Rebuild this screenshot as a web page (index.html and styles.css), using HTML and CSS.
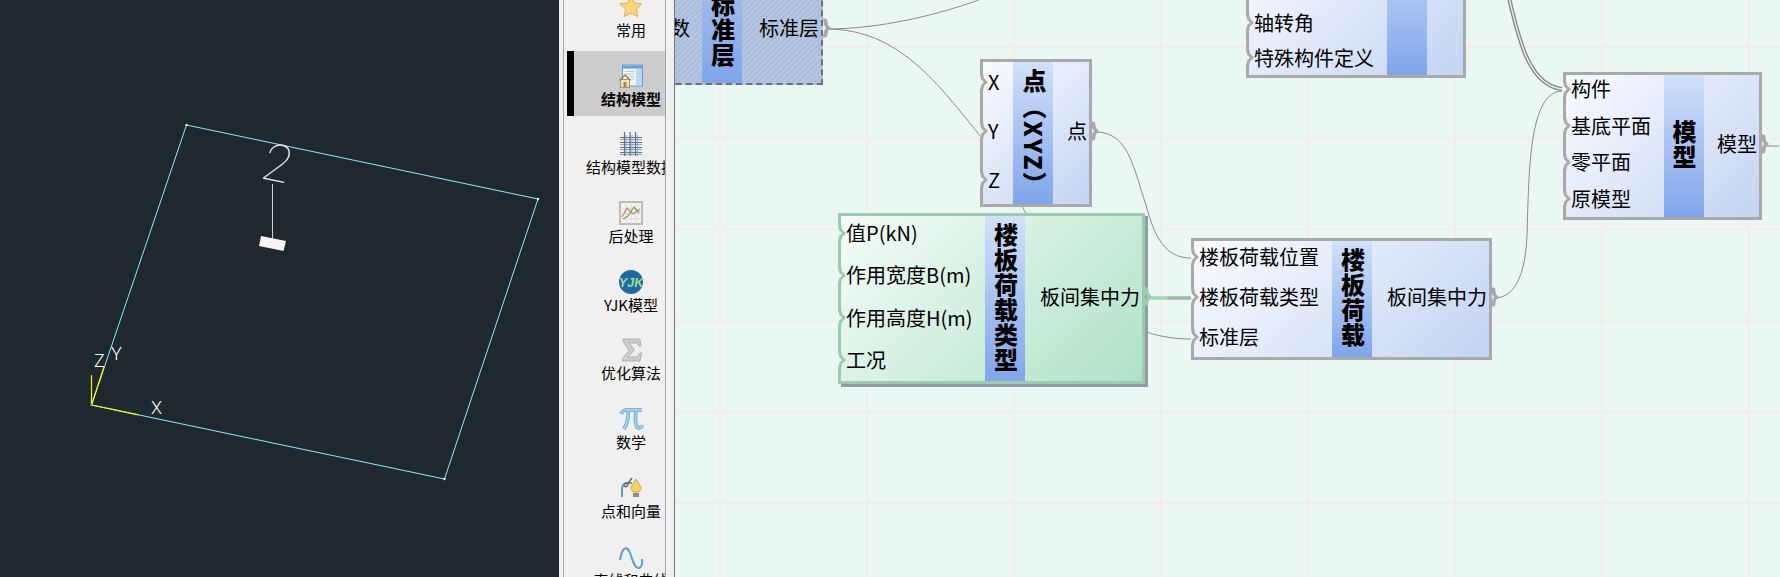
FILE: index.html
```html
<!DOCTYPE html>
<html lang="zh-CN">
<head>
<meta charset="utf-8">
<title>Graph editor</title>
<link rel="stylesheet" href="styles.css">
</head>
<body>
<div class="app">
  <section class="viewport">
    <svg class="scene" width="559" height="577" viewBox="0 0 559 577">
      <polygon class="slab" points="186.500,125 538,199 444.500,479 91.500,405"/>
      <line class="axis" x1="91.500" y1="405" x2="138.500" y2="414.800"/>
      <line class="axis" x1="91.500" y1="405" x2="104" y2="367"/>
      <line class="axis" x1="91.500" y1="405" x2="91.500" y2="375"/>
      <circle class="vertex" cx="186.500" cy="125" r="1.200"/>
      <circle class="vertex" cx="538" cy="199" r="1.200"/>
      <circle class="vertex" cx="444.500" cy="479" r="1.200"/>
      <circle class="vertex-dim" cx="91.500" cy="405" r="1.200"/>
      <line class="leader" x1="272.500" y1="184" x2="272.500" y2="243"/>
      <polygon class="tag" points="261,236 286,241 283.500,251 259,246"/>
      <text class="label-2" transform="matrix(1 .2 -.28 1 259 178)">2</text>
      <text class="axis-name" x="94" y="367">Z</text>
      <text class="axis-name" x="111" y="360">Y</text>
      <text class="axis-name" x="151" y="414">X</text>
    </svg>
  </section>

  <nav class="toolbox">
    <div class="tool-panel">
      <div class="tool">
        <svg class="tool-icon" viewBox="0 0 24 24"><path class="i-star" d="M12 1l3.300 7 7.700.9-5.700 5.200 1.500 7.600L12 18l-6.800 3.700 1.500-7.600L1 8.900 8.700 8z"/></svg>
        <span class="tool-name">常用</span>
      </div>
      <div class="tool tool-active">
        <svg class="tool-icon" viewBox="0 0 24 24">
          <rect class="i-win" x="3.500" y="1" width="20" height="21"/>
          <rect class="i-winbar" x="4" y="1.500" width="19" height="3"/>
          <rect class="i-winside" x="17" y="5" width="6" height="16"/>
          <path class="i-winlines" d="M6 7.500h9M6 10h9M9 12.500h6M11 15h4"/>
          <path class="i-roof" d="M0 16l6-6 6 6-1 1-5-5-5 5z"/>
          <rect class="i-house" x="1.500" y="15.500" width="9" height="8"/>
          <rect class="i-door" x="4.500" y="18" width="3" height="5.500"/>
        </svg>
        <span class="tool-name">结构模型</span>
      </div>
      <div class="tool">
        <svg class="tool-icon" viewBox="0 0 24 24">
          <path class="i-grid-b" d="M1 7.500h22M1 12.500h22M1 17.500h22M1 22.500h22"/>
          <path class="i-grid-g" d="M1 5.500h22M1 10.500h22M1 15.500h22M1 20.500h22M5.500 0v24M11 0v24M16.500 0v24"/>
          <path class="i-grid-b" d="M7 3v21M13 3v21M18.500 3v21"/>
        </svg>
        <span class="tool-name">结构模型数据</span>
      </div>
      <div class="tool">
        <svg class="tool-icon" viewBox="0 0 24 24">
          <rect class="i-chart" x="1" y="1" width="22" height="22"/>
          <path class="i-chartgrid" d="M1 8h22M1 13h22M1 18h22M7 1v22M12 1v22M17 1v22"/>
          <path class="i-red" d="M3 16l5-9 6 6 7-5"/>
          <path class="i-green" d="M4 18l5-3 6-9 5 6"/>
        </svg>
        <span class="tool-name">后处理</span>
      </div>
      <div class="tool">
        <svg class="tool-icon" viewBox="0 0 24 24">
          <circle class="i-globe" cx="12" cy="12" r="12"/>
          <text class="i-yjk" x="12" y="16.500">YJK</text>
        </svg>
        <span class="tool-name">YJK模型</span>
      </div>
      <div class="tool">
        <svg class="tool-icon" viewBox="0 0 24 24"><path class="i-sigma" d="M4 1H21L22 8H20L18.500 5H10L15.500 12 9 19H18.500L20.500 15H22.500L21 23H3.500V20.500L10 12.500 4 3.500z"/></svg>
        <span class="tool-name">优化算法</span>
      </div>
      <div class="tool">
        <svg class="tool-icon" viewBox="0 0 24 24">
          <path class="i-pi-edge" d="M2 7Q4 2.500 9 3H23M9.500 3Q9.500 15 5 22M17 3Q15 21 20 21Q22.500 20.500 23 18"/>
          <path class="i-pi-fill" d="M2 7Q4 2.500 9 3H23M9.500 3Q9.500 15 5 22M17 3Q15 21 20 21Q22.500 20.500 23 18"/>
        </svg>
        <span class="tool-name">数学</span>
      </div>
      <div class="tool">
        <svg class="tool-icon" viewBox="0 0 24 24">
          <path class="i-curve" d="M3 21V13q0-5 5-6h5"/>
          <path class="i-hand" d="M6 11L13 2"/>
          <circle class="i-knob" cx="7" cy="9" r="2"/>
          <path class="i-nib" d="M17 3l5 8q1 2-2 5h-6q-3-3-2-5z"/>
          <rect class="i-nibbase" x="14" y="17" width="6" height="4"/>
        </svg>
        <span class="tool-name">点和向量</span>
      </div>
      <div class="tool">
        <svg class="tool-icon" viewBox="0 0 24 24"><path class="i-wave" d="M1 15C3 2 8 0 11 8s5 16 9 15 3-6 3-9"/></svg>
        <span class="tool-name">直线和曲线</span>
      </div>
    </div>
  </nav>

  <main class="canvas">
    <svg class="wires" width="1104" height="577" viewBox="676 0 1104 577">
      <path class="wire" d="M828 29C880 29 940 15 985 -2"/>
      <path class="wire" d="M828 29C900 29 940 85 982 137"/>
      <path class="wire" d="M982 137C1000 160 1010 185 1025 210C1070 290 1120 339 1192 339"/>
      <path class="wire" d="M1097 132C1130 132 1135 170 1147 205C1155 235 1165 258 1192 258"/>
      <path class="wire" d="M1498 298C1522 295 1527 260 1528 235C1530 170 1530 92 1563 91"/>
      <path class="wire-multi" d="M1510 -2C1520 40 1530 85 1563 89"/>
      <path class="wire-core" d="M1510 -2C1520 40 1530 85 1563 89"/>
      <path class="wire" d="M1768 146H1780"/>
      <path class="wire-thick-a" d="M1146 298H1168"/>
      <path class="wire-thick-b" d="M1168 298H1194"/>
    </svg>

    <div class="node n-std">
      <div class="inputs"><div class="port port-plain">层数</div></div>
      <div class="title">标准层</div>
      <div class="outputs"><div class="port out">标准层</div></div>
    </div>

    <div class="node n-upper">
      <div class="inputs">
        <div class="port in">轴转角</div>
        <div class="port in">特殊构件定义</div>
      </div>
      <div class="title"></div>
      <div class="outputs"></div>
    </div>

    <div class="node n-point">
      <div class="inputs">
        <div class="port in">X</div>
        <div class="port in">Y</div>
        <div class="port in">Z</div>
      </div>
      <div class="title title-vertical">点（XYZ）</div>
      <div class="outputs"><div class="port out">点</div></div>
    </div>

    <div class="node n-green">
      <div class="inputs">
        <div class="port in">值P(kN)</div>
        <div class="port in">作用宽度B(m)</div>
        <div class="port in">作用高度H(m)</div>
        <div class="port in">工况</div>
      </div>
      <div class="title">楼板荷载类型</div>
      <div class="outputs"><div class="port out">板间集中力</div></div>
    </div>

    <div class="node n-load">
      <div class="inputs">
        <div class="port in">楼板荷载位置</div>
        <div class="port in">楼板荷载类型</div>
        <div class="port in">标准层</div>
      </div>
      <div class="title">楼板荷载</div>
      <div class="outputs"><div class="port out">板间集中力</div></div>
    </div>

    <div class="node n-model">
      <div class="inputs">
        <div class="port in">构件</div>
        <div class="port in">基底平面</div>
        <div class="port in">零平面</div>
        <div class="port in">原模型</div>
      </div>
      <div class="title">模型</div>
      <div class="outputs"><div class="port out">模型</div></div>
    </div>
  </main>
</div>
</body>
</html>
```
FILE: styles.css
```css
html, body {
  margin: 0;
  height: 100%;
  overflow: hidden;
  background: #20282f;
}

.app {
  display: flex;
  width: 1780px;
  height: 577px;
  overflow: hidden;
  font-family: "Noto Sans CJK SC", "Noto Sans", sans-serif;
  color: #000;
}

/* 3D viewport */
.viewport {
  flex: 0 0 559px;
  background: #20282f;
}
.scene { display: block; }
.slab { fill: none; stroke: #8cecfb; stroke-width: 1; }
.axis { stroke: #f8f800; stroke-width: 1.200; }
.vertex { fill: #f2f2f2; }
.vertex-dim { fill: #999; }
.leader { stroke: #cfcfcf; stroke-width: 1; }
.tag { fill: #f4f4f4; }
.label-2 {
  font: 100 50px Roboto, "Liberation Sans", sans-serif;
  fill: #e4e4e4;
}
.axis-name {
  font: 300 18px Roboto, "Liberation Sans", sans-serif;
  fill: #fff;
}

/* component toolbox */
.toolbox {
  flex: 0 0 116px;
  box-sizing: border-box;
  height: 577px;
  padding: 0 8px 0 4px;
  background: #f0f0f0;
  border-right: 1px solid #777;
}
.tool-panel {
  box-sizing: border-box;
  height: 577px;
  padding-left: 3px;
  border-left: 1px solid #a8a8a8;
  border-right: 1px solid #a8a8a8;
  overflow: hidden;
  display: flex;
  flex-direction: column;
  gap: 3.700px;
}
.tool {
  flex: 0 0 65px;
  box-sizing: border-box;
  width: 98px;
  padding: 13px 0 6px 23px;
  border-left: 7px solid transparent;
  display: flex;
  flex-direction: column;
  align-items: center;
  overflow: hidden;
}
.tool:first-child { margin-top: -18px; }
.tool-active {
  background: #cccccc;
  border-left-color: #000;
}
.tool-active .tool-name { font-weight: 700; }
.tool-icon {
  flex: 0 0 24px;
  width: 24px;
  height: 24px;
  overflow: visible;
}
.tool-name {
  flex: 0 0 22px;
  font-size: 15px;
  line-height: 21px;
  white-space: nowrap;
}

.i-star { fill: #fdd878; stroke: #e9ab55; stroke-width: 1; }
.i-win { fill: #eef4fa; stroke: #5d9fd3; stroke-width: 1; }
.i-winbar { fill: #5da4dc; }
.i-winside { fill: #bcd9f0; }
.i-winlines { stroke: #b5c6d6; fill: none; }
.i-roof { fill: #a2774a; }
.i-house { fill: #f3e2bb; stroke: #9a7a52; stroke-width: .8; }
.i-door { fill: #b9804a; }
.i-grid-b { stroke: #7ea7d4; stroke-width: 1; fill: none; }
.i-grid-g { stroke: #6b6f75; stroke-width: 1.200; fill: none; }
.i-chart { fill: #f4f4f4; stroke: #b4b4b4; stroke-width: 1.800; }
.i-chartgrid { stroke: #dcdcdc; fill: none; }
.i-red { stroke: #d57a70; stroke-width: 1.300; fill: none; }
.i-green { stroke: #6fae45; stroke-width: 1.300; fill: none; }
.i-globe { fill: #1d6aa8; }
.i-yjk {
  font: italic 700 12.500px "Liberation Sans", sans-serif;
  fill: #a5dd8c;
  text-anchor: middle;
}
.i-sigma { fill: #cdcdcd; stroke: #a5a5a5; stroke-width: .8; }
.i-pi-edge { fill: none; stroke: #5d9fd3; stroke-width: 3.600; }
.i-pi-fill { fill: none; stroke: #a6d1f3; stroke-width: 2; }
.i-curve { stroke: #5a9ccc; stroke-width: 2; fill: none; }
.i-hand { stroke: #666; stroke-width: 1.300; fill: none; }
.i-knob { fill: #bbb; stroke: #555; }
.i-nib { fill: #f4cf62; stroke: #c49a3a; stroke-width: .8; }
.i-nibbase { fill: #888; }
.i-wave { stroke: #5aa0d2; stroke-width: 2; fill: none; }

/* node canvas */
.canvas {
  position: relative;
  flex: 1;
  height: 577px;
  overflow: hidden;
  background-color: #ebf7f2;
  background-image:
    linear-gradient(to right, #f3ece9 2px, transparent 2px),
    linear-gradient(to bottom, #f3ece9 2px, transparent 2px);
  background-size: 147px 91.200px;
  background-position: 44px 0, 0 46px;
}
.wires {
  position: absolute;
  left: 0;
  top: 0;
  overflow: visible;
}
.wire { fill: none; stroke: #8a8a8a; stroke-width: 1; }
.wire-multi { fill: none; stroke: #808080; stroke-width: 4; }
.wire-core { fill: none; stroke: #e6eeea; stroke-width: 1.500; }
.wire-thick-a { fill: none; stroke: #a6d6bb; stroke-width: 3.500; }
.wire-thick-b { fill: none; stroke: #a3b8aa; stroke-width: 3.500; }

.node {
  position: absolute;
  box-sizing: border-box;
  display: flex;
  border: 3px solid #a9a9a9;
  background: linear-gradient(135deg, #fafbff 0%, #c4d4f3 100%);
  font-size: 20px;
  line-height: 24px;
}
.inputs, .outputs {
  display: flex;
  flex-direction: column;
  margin-top: -4px;
}
.outputs { flex: 1; }
.title {
  flex: 0 0 40px;
  box-sizing: border-box;
  padding: 0 0 6px 2px;
  display: flex;
  align-items: center;
  justify-content: center;
  text-align: center;
  font-size: 24px;
  line-height: 25px;
  font-weight: 900;
  background: linear-gradient(to bottom, #d2e1f9 0%, #7fa5ea 100%);
}
.title-vertical {
  writing-mode: vertical-rl;
  padding: 0 0 0 2px;
  line-height: 34px;
  letter-spacing: 2px;
}
.port {
  position: relative;
  flex: 1;
  display: flex;
  align-items: center;
  white-space: nowrap;
}
.in { padding-left: 5px; }
.out { justify-content: flex-end; padding-right: 2px; }

.in::before {
  content: "";
  position: absolute;
  left: -3px;
  top: 50%;
  width: 5px;
  height: 14px;
  margin-top: -7px;
  background: #ebf7f2;
  clip-path: polygon(0 0, 100% 50%, 0 100%);
}
.in::after {
  content: "";
  position: absolute;
  left: -3px;
  top: 50%;
  width: 8px;
  height: 18px;
  margin-top: -9px;
  background: #a9a9a9;
  clip-path: polygon(0 0, 3px 0, 4px 5px, 8px 9px, 4px 13px, 3px 18px, 0 18px, 1px 12px, 4px 9px, 1px 6px);
}
.out::after {
  content: "";
  position: absolute;
  right: -10px;
  top: 50%;
  width: 8px;
  height: 20px;
  margin-top: -10px;
  background: #a9a9a9;
  clip-path: polygon(0 0, 4px 1px, 5px 7px, 8px 10px, 5px 13px, 4px 19px, 0 20px, 1px 13px, 3px 10px, 1px 7px);
}

.n-std {
  left: -40px;
  top: -29px;
  width: 188px;
  height: 114px;
  border: 2px dashed #6c6f78;
  background: repeating-linear-gradient(135deg, #b6c5e2 0 2px, #abbcdc 2px 4px);
}
.n-std .inputs { flex: 0 0 65px; align-items: flex-end; margin-top: 0; }
.n-std .outputs { margin-top: 0; }
.n-std .title { padding-bottom: 0; background: linear-gradient(to bottom, #a9c1ec 0%, #7fa5ea 100%); }
.port-plain { padding-right: 12px; }

.n-upper {
  left: 571px;
  top: -72px;
  width: 220px;
  height: 150px;
}
.n-upper .inputs { flex: 0 0 138px; justify-content: flex-end; margin-top: 0; }
.n-upper .port { flex: 0 0 35px; }

.n-point {
  left: 305px;
  top: 59px;
  width: 112px;
  height: 148px;
}
.n-point .inputs { flex: 0 0 30px; }

.n-green {
  left: 163px;
  top: 213px;
  width: 307px;
  height: 171px;
  border-color: #9ccbb0;
  background: linear-gradient(135deg, #f5fcf9 0%, #b0e2c7 100%);
  box-shadow: 3px 3px 0 #8f9aa3;
}
.n-green .inputs { flex: 0 0 144px; }
.n-green .port::after { background: #9ccbb0; }

.n-load {
  left: 516px;
  top: 238px;
  width: 301px;
  height: 122px;
}
.n-load .inputs { flex: 0 0 138px; }

.n-model {
  left: 888px;
  top: 72px;
  width: 199px;
  height: 148px;
}
.n-model .inputs { flex: 0 0 97.500px; }
```
